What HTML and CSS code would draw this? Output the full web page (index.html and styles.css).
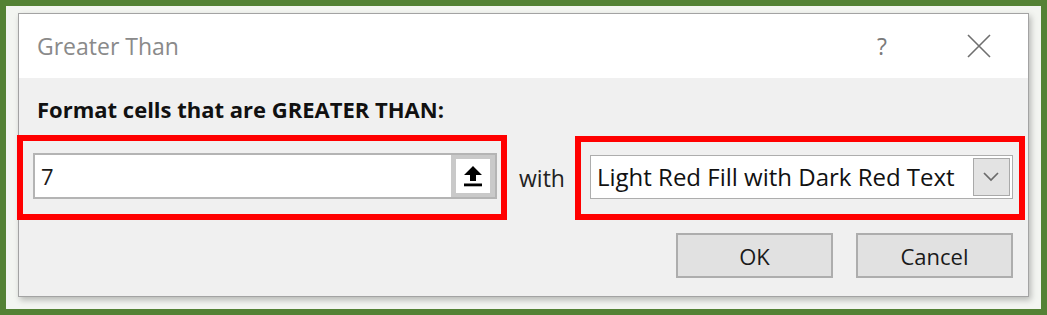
FILE: index.html
```html
<!DOCTYPE html>
<html lang="en">
<head>
  <meta charset="UTF-8">
  <title>Greater Than</title>
  <link rel="stylesheet" href="styles.css">
</head>
<body>
  <div class="frame">
    <div class="dialog">
      <div class="titlebar">
        <span class="title">Greater Than</span>
        <span class="help">?</span>
        <span class="close">
          <svg width="24" height="24" viewBox="0 0 24 24">
            <path d="M1 1 L23 23 M23 1 L1 23" stroke="#6f6f6f" stroke-width="1.6" fill="none"/>
          </svg>
        </span>
      </div>
      <div class="content">
        <div class="label">Format cells that are GREATER THAN:</div>
        <div class="row">
          <div class="mark mark-left">
            <div class="input">
              <span class="value">7</span>
              <span class="ref-btn">
                <span class="ref-inner">
                  <svg width="24" height="24" viewBox="0 0 24 24">
                    <path d="M12 2 L21 11 L15 11 L15 17 L9 17 L9 11 L3 11 Z" fill="#000"/>
                    <rect x="3" y="19.5" width="18" height="2.8" fill="#000"/>
                  </svg>
                </span>
              </span>
            </div>
          </div>
          <span class="with">with</span>
          <div class="mark mark-right">
            <div class="select">
              <span class="option">Light Red Fill with Dark Red Text</span>
              <span class="drop">
                <svg width="18" height="11" viewBox="0 0 18 11">
                  <path d="M2 2 L9 9 L16 2" stroke="#6a6a6a" stroke-width="1.7" fill="none"/>
                </svg>
              </span>
            </div>
          </div>
        </div>
        <div class="buttons">
          <button class="btn">OK</button>
          <button class="btn">Cancel</button>
        </div>
      </div>
    </div>
  </div>
</body>
</html>
```

FILE: styles.css
```css
body {
  margin: 0;
  font-family: "Open Sans", "Noto Sans", sans-serif;
  background: #ffffff;
}

.frame {
  width: 1047px;
  height: 315px;
  box-sizing: border-box;
  border: 6px solid #548235;
  background: #f3f5f1;
  padding: 7px 12px 12px 12px;
}

.dialog {
  height: 284px;
  box-sizing: border-box;
  border: 1px solid #a3a3a3;
  background: #f0f0f0;
  box-shadow: 2px 3px 6px rgba(0, 0, 0, 0.25);
  display: flex;
  flex-direction: column;
}

/* Title bar */
.titlebar {
  height: 64px;
  background: #fff;
  display: flex;
  align-items: center;
  padding: 0 37px 0 18px;
}

.title {
  flex: 1;
  font-size: 23px;
  color: #8a8a8a;
}

.help {
  font-size: 23px;
  color: #7a7a7a;
  margin-right: 80px;
}

.close {
  display: flex;
}

/* Body */
.content {
  flex: 1;
  display: flex;
  flex-direction: column;
}

.label {
  font-weight: bold;
  font-size: 22px;
  line-height: 30px;
  color: #111;
  margin: 16px 0 0 18px;
}

.row {
  display: flex;
  align-items: center;
  margin: 11px 0 0 -2px;
}

.mark {
  box-sizing: border-box;
  border: 6px solid #ff0000;
  height: 85px;
}

.mark-left {
  width: 490px;
  padding: 12px 4px 0 10px;
}

.mark-right {
  width: 450px;
  height: 84px;
  padding: 13px 6px 0 9px;
}

.input {
  height: 46px;
  box-sizing: border-box;
  border: 2px solid #b4b4b4;
  background: #fff;
  display: flex;
  align-items: center;
}

.value {
  flex: 1;
  font-size: 22px;
  padding-left: 6px;
  color: #1a1a1a;
}

.ref-btn {
  width: 44px;
  height: 42px;
  box-sizing: border-box;
  background: #c9c9c9;
  padding: 4px 5px;
  display: flex;
}

.ref-inner {
  flex: 1;
  background: #fff;
  display: flex;
  align-items: center;
  justify-content: center;
}

.with {
  font-size: 23px;
  color: #222;
  margin: 0 10px 0 12px;
}

.select {
  height: 44px;
  box-sizing: border-box;
  border: 1px solid #adadad;
  background: #fff;
  display: flex;
  align-items: center;
  padding: 0 2px 0 6px;
}

.option {
  flex: 1;
  font-size: 24px;
  color: #111;
  white-space: nowrap;
}

.drop {
  width: 37px;
  height: 38px;
  box-sizing: border-box;
  border: 1px solid #a9a9a9;
  background: #e3e3e3;
  display: flex;
  align-items: center;
  justify-content: center;
}

.buttons {
  display: flex;
  justify-content: flex-end;
  gap: 23px;
  margin: 13px 15px 0 0;
}

.btn {
  width: 157px;
  height: 45px;
  border: 2px solid #adadad;
  background: #e1e1e1;
  font-family: "Open Sans", "Noto Sans", sans-serif;
  font-size: 22px;
  color: #1a1a1a;
}
```
